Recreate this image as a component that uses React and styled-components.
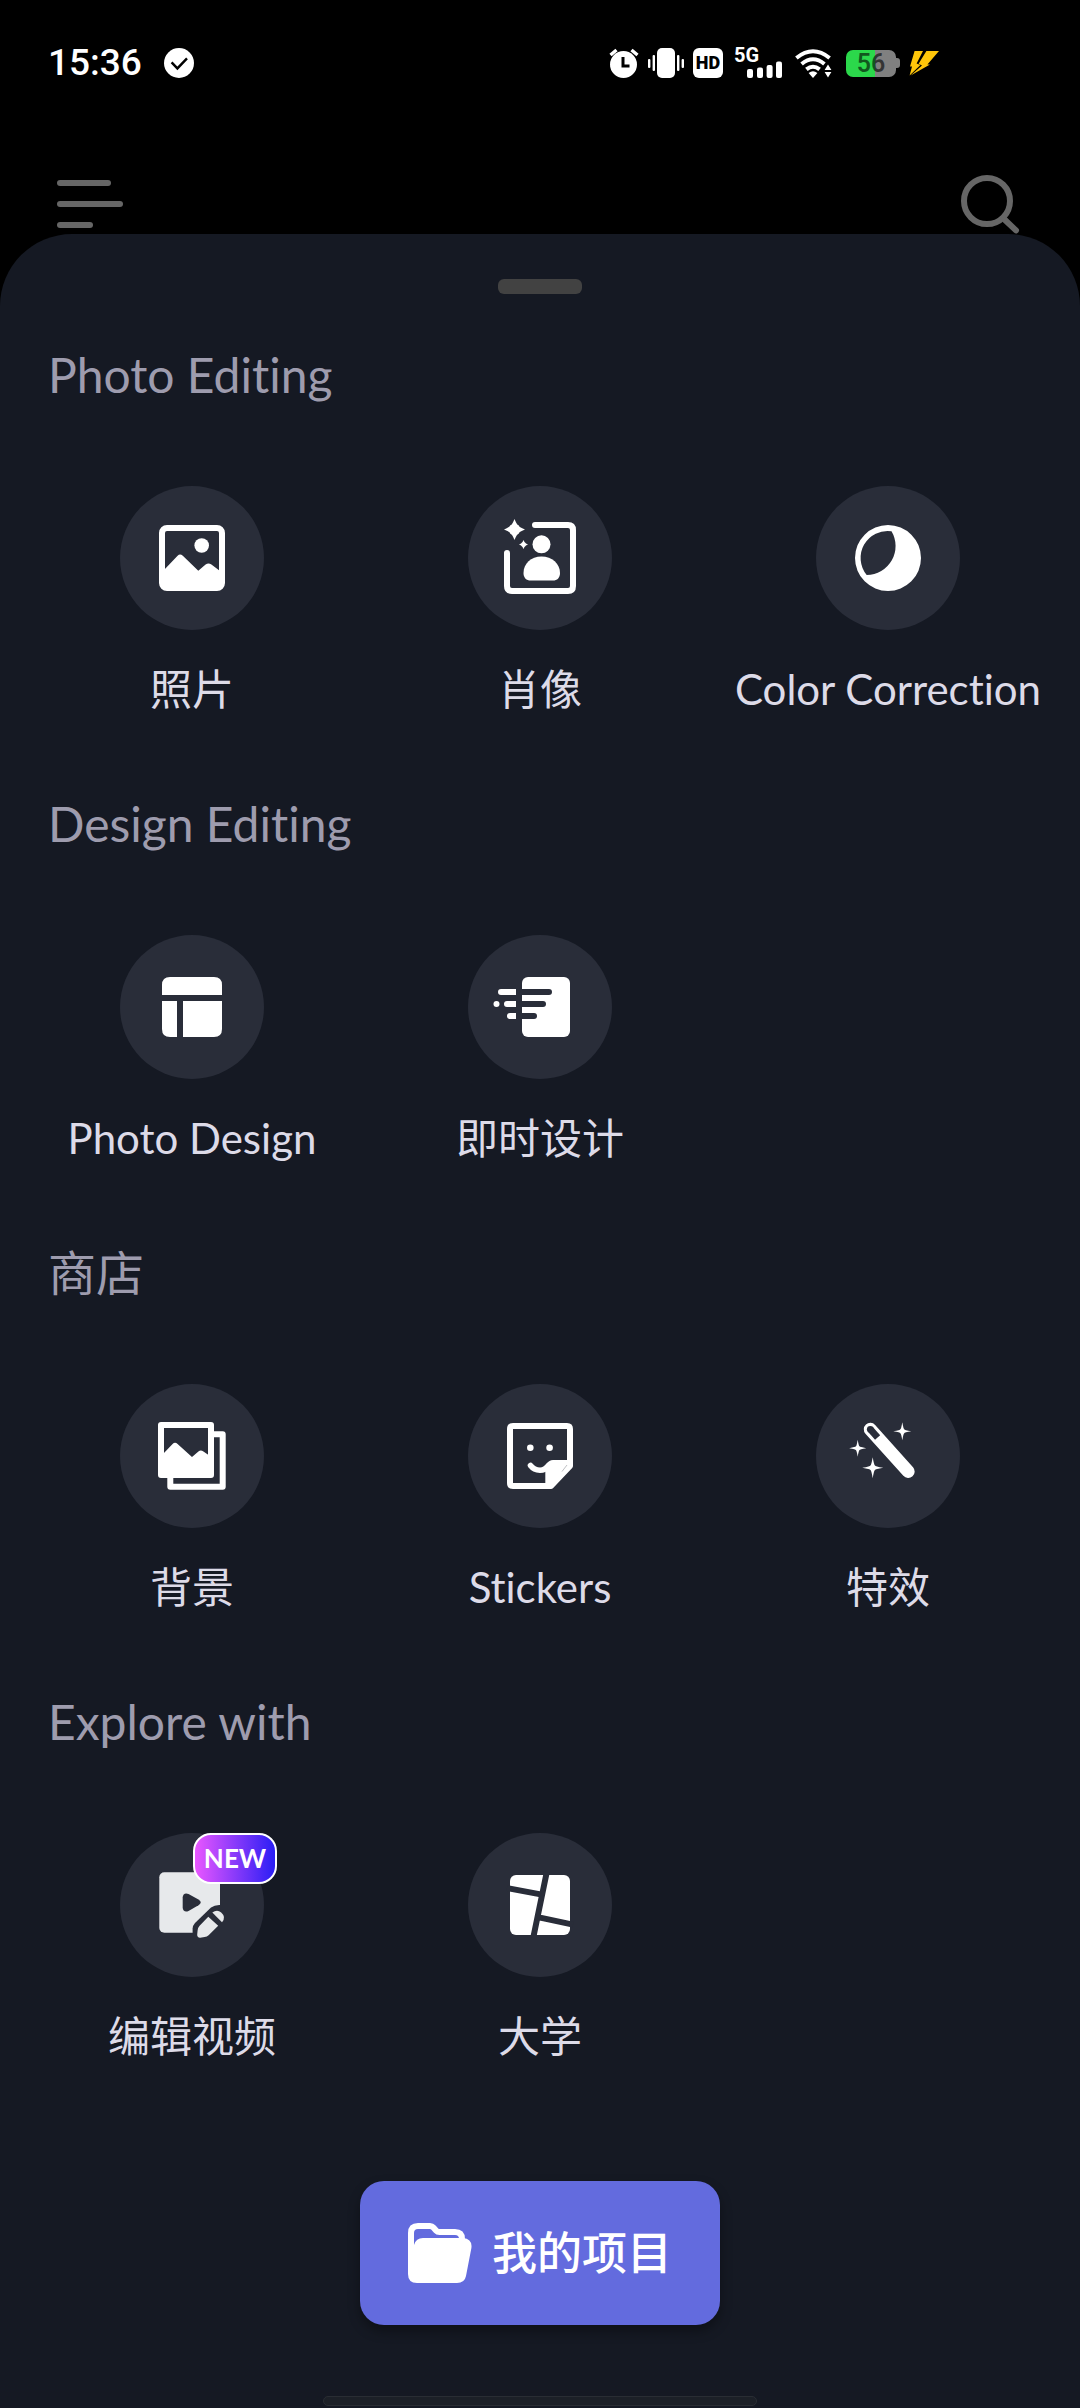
import React from 'react'
import styled, { createGlobalStyle } from 'styled-components'

const sheetColor = '#151923'
const discColor = '#292d39'

const GlobalStyle = createGlobalStyle`
  * {
    box-sizing: border-box;
  }
  body {
    margin: 0;
    background: #000;
    font-family: Lato, "Noto Sans CJK SC", sans-serif;
    font-variant-ligatures: none;
  }
  button {
    border: none;
    padding: 0;
    background: none;
    font: inherit;
    font-variant-ligatures: none;
    color: inherit;
    cursor: pointer;
  }
  svg {
    display: block;
  }
`

const Page = styled.div`
  min-height: 100vh;
  display: flex;
  flex-direction: column;
`

/* status bar */

const StatusBar = styled.div`
  height: 126px;
  padding: 0 141px 0 48px;
  display: flex;
  align-items: center;
  justify-content: space-between;
  color: #fff;
  font-family: Roboto, sans-serif;
`
const StatusLeft = styled.div`
  display: flex;
  align-items: center;
  gap: 22px;
`
const StatusRight = styled.div`
  display: flex;
  align-items: center;
  gap: 9px;
`
const Clock = styled.time`
  font-size: 37px;
  line-height: 46px;
  font-weight: 500;
`
const HdTag = styled.span`
  width: 30px;
  height: 30px;
  border-radius: 6px;
  background: #fff;
  color: #000;
  font-size: 18px;
  line-height: 30px;
  font-weight: 900;
  text-align: center;
`
const Battery = styled.div`
  display: flex;
  align-items: center;
`
const BatteryBody = styled.span`
  width: 50px;
  height: 27px;
  border-radius: 7px;
  background: linear-gradient(90deg, #2bd84b 58%, #808080 58%);
  color: rgba(0, 0, 0, 0.6);
  font-size: 25px;
  line-height: 28px;
  font-weight: 600;
  text-align: center;
`
const BatteryTip = styled.span`
  width: 4px;
  height: 10px;
  border-radius: 0 3px 3px 0;
  background: #808080;
`

/* dimmed app bar behind the sheet */

const TopBar = styled.header`
  height: 108px;
  padding: 0 60px 0 57px;
  display: flex;
  align-items: flex-end;
  justify-content: space-between;
  color: #666;
`

/* bottom sheet */

const Sheet = styled.main`
  flex: 1;
  display: flex;
  flex-direction: column;
  align-items: center;
  padding-top: 45px;
  border-radius: 72px 72px 0 0;
  background: ${sheetColor};
`
const Handle = styled.div`
  width: 84px;
  height: 15px;
  margin-bottom: 52px;
  border-radius: 6px;
  background: #424242;
`
const Sections = styled.div`
  width: 100%;
  display: flex;
  flex-direction: column;
  gap: 81px;
`
const SectionTitle = styled.h2`
  margin: 0 48px 82px;
  font-size: 48px;
  line-height: 58px;
  font-weight: 400;
  color: #9e9cae;
`
const Grid = styled.div`
  padding: 0 18px;
  display: grid;
  grid-template-columns: repeat(3, 1fr);
`
const Tile = styled.button`
  display: flex;
  flex-direction: column;
  align-items: center;
  gap: 34px;
`
const Disc = styled.span`
  position: relative;
  width: 144px;
  height: 144px;
  border-radius: 50%;
  background: ${discColor};
  color: ${props => (props.$muted ? '#e7e9eb' : '#fff')};
`
const Label = styled.span`
  font-size: 42px;
  line-height: 50px;
  white-space: nowrap;
  color: #dddbe8;
`
const NewBadge = styled.span`
  position: absolute;
  top: 0;
  left: 73px;
  width: 84px;
  height: 51px;
  border: 2px solid #fff;
  border-radius: 18px;
  background: linear-gradient(90deg, #e957ff, #2a1ef5);
  color: #fff;
  font-size: 26px;
  line-height: 47px;
  font-weight: 700;
  text-align: center;
`
const ProjectsButton = styled.button`
  height: 144px;
  margin-top: 120px;
  padding: 0 48px;
  display: flex;
  align-items: center;
  gap: 20px;
  border-radius: 24px;
  background: #636bde;
  box-shadow: 0 6px 12px rgba(0, 0, 0, 0.35);
  color: #fff;
  font-size: 45px;
  line-height: 54px;
  font-weight: 500;
  white-space: nowrap;
`
const NavPill = styled.div`
  width: 434px;
  height: 10px;
  margin: auto 0 2px;
  border: 1px solid #292d33;
  border-radius: 5px;
  background: #1c2027;
`

const Star = ({ x, y, r, k = 0.22 }) => {
  const i = r * k
  return (
    <path
      fill="currentColor"
      d={`M${x} ${y - r}Q${x + i * 0.6} ${y - i} ${x + i} ${y - i}Q${x + i} ${y - i * 0.6} ${x + r} ${y}
        Q${x + i} ${y + i * 0.6} ${x + i} ${y + i}Q${x + i * 0.6} ${y + i} ${x} ${y + r}
        Q${x - i * 0.6} ${y + i} ${x - i} ${y + i}Q${x - i} ${y + i * 0.6} ${x - r} ${y}
        Q${x - i} ${y - i * 0.6} ${x - i} ${y - i}Q${x - i * 0.6} ${y - i} ${x} ${y - r}Z`}
    />
  )
}

// drawings share the 144px disc as their canvas
const icons = {
  photo: (
    <>
      <rect x="42" y="42" width="60" height="60" rx="5" fill="none" stroke="currentColor" strokeWidth="6" />
      <circle cx="81.7" cy="59.5" r="7.3" fill="currentColor" />
      <path fill="currentColor" d="M44 84L57.6 69.8Q60 67.4 62.8 69.8L78.3 84.7L85.6 78.4Q88.5 76.4 91.4 78.4L100 85V102H44Z" />
    </>
  ),
  portrait: (
    <>
      <path
        d="M67 39H100Q105 39 105 44V100Q105 105 100 105H44Q39 105 39 100V67"
        fill="none" stroke="currentColor" strokeWidth="6" strokeLinecap="round"
      />
      <Star x={46.5} y={43.5} r={10.5} k={0.4} />
      <Star x={55.5} y={58.5} r={4.5} k={0.4} />
      <circle cx="73.5" cy="58.3" r="9" fill="currentColor" />
      <path fill="currentColor" d="M55.5 87C55.5 78 63 70.6 73.5 70.6S92 78 92 87C92 92 89 94.6 85 94.6H62.5C58.5 94.6 55.5 92 55.5 87Z" />
    </>
  ),
  color: (
    <path
      fill="currentColor" fillRule="evenodd"
      d="M72 39A33 33 0 1 1 72 105A33 33 0 1 1 72 39ZM75.5 45.2A27 27 0 0 0 50.7 89A29 29 0 0 0 75.5 45.2Z"
    />
  ),
  layout: (
    <path fill="currentColor" d="M42 60V50Q42 42 50 42H94Q102 42 102 50V60ZM42 66H57V102H50Q42 102 42 94ZM63 66H102V94Q102 102 94 102H63Z" />
  ),
  instant: (
    <>
      <rect x="54" y="42" width="48" height="60" rx="6" fill="currentColor" />
      <path d="M54 57H81M54 69H75M54 81H66" stroke={discColor} strokeWidth="6" strokeLinecap="round" />
      <path fill="currentColor" d="M48 54H33A3 3 0 0 0 33 60H48ZM48 66H39A3 3 0 0 0 39 72H48ZM48 78H42A3 3 0 0 0 42 84H48Z" />
      <circle cx="28.5" cy="69" r="3" fill="currentColor" />
    </>
  ),
  background: (
    <>
      <path d="M94 50.3H102.7V102.7H50.3V94" fill="none" stroke="currentColor" strokeWidth="6" strokeLinejoin="round" />
      <rect x="41" y="41" width="50" height="50" fill="none" stroke="currentColor" strokeWidth="6" strokeLinejoin="round" />
      <path fill="currentColor" d="M43 70L52.6 60Q55 57.6 57.6 60L72 73L78.4 67.4Q80.7 65.4 83.4 67.4L90 72V92H43Z" />
    </>
  ),
  sticker: (
    <>
      <path
        d="M45 42H99Q102 42 102 45V82L83 102H45Q42 102 42 99V45Q42 42 45 42Z"
        fill="none" stroke="currentColor" strokeWidth="6" strokeLinejoin="round"
      />
      <path fill="currentColor" d="M104 76H85Q81 76 79 79.5L77.3 86V103H84L104 83Z" />
      <path d="M94 87.5L99 81" stroke={discColor} strokeWidth="0.6" opacity="0.5" />
      <circle cx="62.3" cy="63.7" r="3.3" fill="currentColor" />
      <circle cx="81.6" cy="63.7" r="3.3" fill="currentColor" />
      <path d="M62.5 81.5Q66 86 72 86.3Q77 86.3 80.5 81.5" fill="none" stroke="currentColor" strokeWidth="5.6" strokeLinecap="round" />
    </>
  ),
  effects: (
    <>
      <path d="M54.3 45.3L92.2 87.5" stroke="currentColor" strokeWidth="13" strokeLinecap="round" />
      <circle cx="54.3" cy="45.3" r="3.4" fill={discColor} />
      <path d="M54.3 45.3L61.6 53.6" stroke={discColor} strokeWidth="6.8" />
      <Star x={86.3} y={47.3} r={9} />
      <Star x={41.7} y={64.2} r={8.5} />
      <Star x={56.7} y={83.7} r={10.5} />
    </>
  ),
  video: (
    <>
      <rect x="39.3" y="39.3" width="60.7" height="60.4" rx="5" fill="currentColor" />
      <path fill={discColor} d="M62.7 64.5C62.7 61 65.5 59.4 68.5 61L78.5 66.6Q83 69.4 78.5 72.2L68.5 78C65.5 79.6 62.7 78 62.7 74.5Z" />
      <path fill={discColor} d="M72.6 101V95.5Q72.8 92.4 75 90L91 74.6Q95 71.4 101 72V101Z" />
      <path fill="currentColor" d="M88.3 83.7L98.2 92.8L88.6 102.2Q87 103.6 84.6 104L80.2 104.7Q77 104.8 77.2 101.6L77.6 97.4Q77.8 94.6 79.6 92.7Z" />
      <path fill="currentColor" d="M92.3 79.6Q97 76 101.2 79.4Q106.4 84 102 89.2Z" />
    </>
  ),
  collage: (
    <>
      <rect x="42" y="42" width="60" height="60" rx="6" fill="currentColor" />
      <path d="M78.8 39L65.2 105M39 55.1L74 61.6M71 84.4L105 91.6" stroke={discColor} strokeWidth="6" />
    </>
  ),
}

const sections = [
  {
    title: 'Photo Editing',
    items: [
      { icon: 'photo', label: '照片' },
      { icon: 'portrait', label: '肖像' },
      { icon: 'color', label: 'Color Correction' },
    ],
  },
  {
    title: 'Design Editing',
    items: [
      { icon: 'layout', label: 'Photo Design' },
      { icon: 'instant', label: '即时设计' },
    ],
  },
  {
    title: '商店',
    items: [
      { icon: 'background', label: '背景' },
      { icon: 'sticker', label: 'Stickers' },
      { icon: 'effects', label: '特效' },
    ],
  },
  {
    title: 'Explore with',
    items: [
      { icon: 'video', label: '编辑视频', badge: 'NEW' },
      { icon: 'collage', label: '大学' },
    ],
  },
]

const StatusIcons = () => (
  <StatusRight>
    <svg width="30" height="30" viewBox="0 0 30 30">
      <circle cx="14.5" cy="16.5" r="13.5" fill="#fff" />
      <path d="M1.5 7L7.5 2M22.5 2L28.5 7" stroke="#fff" strokeWidth="3.4" />
      <path d="M14 9V18H20.5" fill="none" stroke="#000" strokeWidth="3" />
    </svg>
    <svg width="36" height="30" viewBox="0 0 36 30" fill="#fff">
      <rect x="9" y="0" width="18" height="30" rx="5" />
      <rect x="0" y="11" width="2.4" height="9" rx="1" />
      <rect x="4.6" y="7" width="2.4" height="16" rx="1" />
      <rect x="29" y="7" width="2.4" height="16" rx="1" />
      <rect x="33.6" y="11" width="2.4" height="9" rx="1" />
    </svg>
    <HdTag>HD</HdTag>
    <svg width="50" height="50" viewBox="0 -10 50 50" fill="#fff">
      <text x="2" y="14" fontFamily="Roboto, sans-serif" fontWeight="700" fontSize="20">5G</text>
      <rect x="15" y="21" width="6" height="9" rx="2" />
      <rect x="25" y="19.4" width="6" height="10.6" rx="2" />
      <rect x="34.6" y="17" width="6" height="13" rx="2" />
      <rect x="44" y="13.6" width="6" height="16.4" rx="2" />
    </svg>
    <svg width="46" height="30" viewBox="0 0 46 30">
      <path d="M5.4 10Q22 -3.4 38.6 10" fill="none" stroke="#fff" strokeWidth="4" />
      <path d="M10.6 16Q22 6.6 33.4 16" fill="none" stroke="#fff" strokeWidth="4" />
      <path d="M15.4 21.4Q22 16 28.6 21.4" fill="none" stroke="#fff" strokeWidth="4" />
      <path d="M17.6 25Q22 21.6 26.4 25L22 30Z" fill="#fff" />
      <path d="M37 16.4L40.4 22H33.6ZM33.6 24H40.4L37 29.6Z" fill="#fff" />
    </svg>
    <Battery>
      <BatteryBody>56</BatteryBody>
      <BatteryTip />
    </Battery>
    <svg width="30" height="30" viewBox="0 0 30 30">
      <path fill="#ffc60a" d="M5.6 3H14L7.6 15.6L11.4 17L0.6 27.6L3 18.6H1ZM17.4 3H30L18.4 16.6H21L1.6 27.4L13 17.4L9.6 15.8Z" />
    </svg>
  </StatusRight>
)

const App = () => {
  return (
    <Page>
      <GlobalStyle />
      <StatusBar>
        <StatusLeft>
          <Clock>15:36</Clock>
          <svg width="30" height="30" viewBox="0 0 30 30">
            <circle cx="15" cy="15" r="15" fill="#fff" />
            <path d="M7.6 14.4L13.4 20.4L23 10.4" fill="none" stroke="#000" strokeWidth="2.4" />
          </svg>
        </StatusLeft>
        <StatusIcons />
      </StatusBar>
      <TopBar>
        <button aria-label="Menu">
          <svg width="66" height="60" viewBox="0 0 66 60" fill="currentColor">
            <rect x="0" y="6" width="54" height="6" rx="3" />
            <rect x="0" y="27" width="66" height="6" rx="3" />
            <rect x="0" y="48" width="36" height="6" rx="3" />
          </svg>
        </button>
        <button aria-label="Search">
          <svg width="60" height="60" viewBox="0 0 60 60" fill="none" stroke="currentColor" strokeWidth="6">
            <circle cx="27" cy="27" r="23" />
            <path d="M44 45L56 56.4" strokeLinecap="round" />
          </svg>
        </button>
      </TopBar>
      <Sheet>
        <Handle />
        <Sections>
          {sections.map(section => (
            <section key={section.title}>
              <SectionTitle>{section.title}</SectionTitle>
              <Grid>
                {section.items.map(item => (
                  <Tile key={item.label}>
                    <Disc $muted={Boolean(item.badge)}>
                      <svg width="144" height="144" viewBox="0 0 144 144">{icons[item.icon]}</svg>
                      {item.badge && <NewBadge>{item.badge}</NewBadge>}
                    </Disc>
                    <Label>{item.label}</Label>
                  </Tile>
                ))}
              </Grid>
            </section>
          ))}
        </Sections>
        <ProjectsButton>
          <svg width="64" height="60" viewBox="0 0 64 60">
            <path
              d="M3 50V10Q3 3 10 3H22Q24 3 25.4 4.6L28 7.4Q29.4 9 31.6 9H47Q54 9 54 16V18"
              fill="none" stroke="currentColor" strokeWidth="6"
            />
            <path fill="currentColor" d="M6 22Q8 15 15 15H55Q64.6 16 63.4 25L58 53Q56.6 60 49 60H9Q0 60 0 51V20Z" />
          </svg>
          我的项目
        </ProjectsButton>
        <NavPill />
      </Sheet>
    </Page>
  )
}

export default App
